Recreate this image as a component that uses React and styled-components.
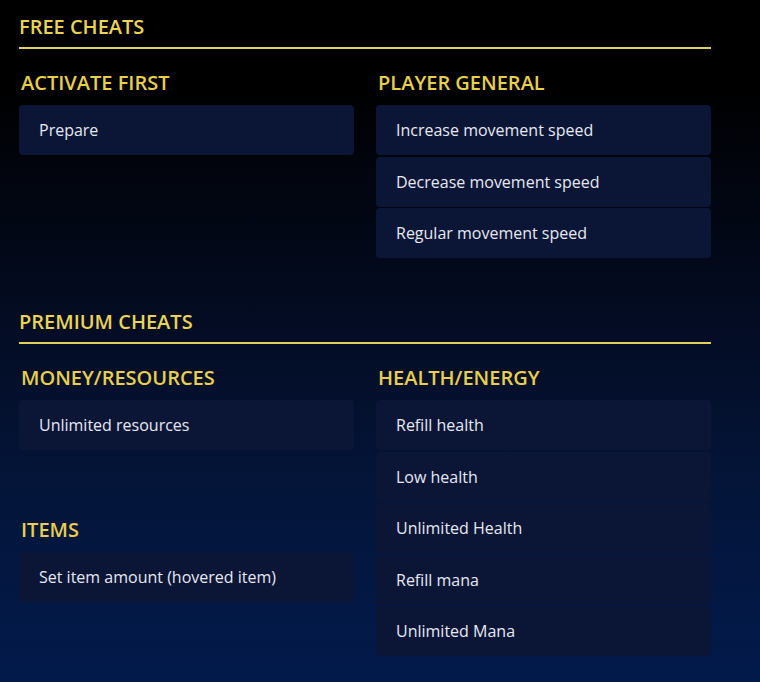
import React from 'react';
import styled, { createGlobalStyle } from 'styled-components';

const GlobalStyle = createGlobalStyle`
  html, body {
    margin: 0;
    padding: 0;
    height: 100%;
  }
  body {
    background: linear-gradient(to bottom, #000 0%, #000 12%, #030a1e 42%, #04153a 72%, #021a4b 100%);
    font-family: "Open Sans", "Noto Sans", sans-serif;
    color: #e4e6f0;
    overflow: hidden;
  }
`

const Page = styled.div`
  width: 692px;
  padding: 15px 0 0 19px;
`

const Section = styled.section`
  & + & {
    margin-top: 52px;
  }
`

const SectionTitle = styled.h2`
  margin: 0;
  font-size: 20px;
  line-height: 24px;
  font-weight: 600;
  text-transform: uppercase;
  color: #ead455;
  padding-bottom: 8px;
  border-bottom: 2px solid #e4d05c;
`

const Columns = styled.div`
  display: grid;
  grid-template-columns: 335px 335px;
  column-gap: 22px;
  margin-top: 22px;
`

const Column = styled.div`
  display: flex;
  flex-direction: column;
  gap: 68px;
`

const Category = styled.div`
  display: flex;
  flex-direction: column;
`

const CategoryTitle = styled.h3`
  margin: 0 0 10px 2px;
  font-size: 20px;
  line-height: 24px;
  font-weight: 600;
  text-transform: uppercase;
  color: #e8cf4c;
`

const List = styled.div`
  display: flex;
  flex-direction: column;
  gap: 1.5px;
`

const Cheat = styled.div`
  height: 50px;
  display: flex;
  align-items: center;
  padding: 0 20px;
  background: #0b1637;
  border-radius: 4px;
  font-size: 16px;
  color: #e6e8f2;
`

const sections = [
  {
    title: 'Free cheats',
    columns: [
      [{ name: 'Activate first', items: ['Prepare'] }],
      [{ name: 'Player general', items: ['Increase movement speed', 'Decrease movement speed', 'Regular movement speed'] }],
    ],
  },
  {
    title: 'Premium cheats',
    columns: [
      [
        { name: 'Money/Resources', items: ['Unlimited resources'] },
        { name: 'Items', items: ['Set item amount (hovered item)'] },
      ],
      [{ name: 'Health/Energy', items: ['Refill health', 'Low health', 'Unlimited Health', 'Refill mana', 'Unlimited Mana'] }],
    ],
  },
]

const App = () => {
  return (
    <Page>
      <GlobalStyle />
      {sections.map((section) => (
        <Section key={section.title}>
          <SectionTitle>{section.title}</SectionTitle>
          <Columns>
            {section.columns.map((column, index) => (
              <Column key={index}>
                {column.map((category) => (
                  <Category key={category.name}>
                    <CategoryTitle>{category.name}</CategoryTitle>
                    <List>
                      {category.items.map((item) => (
                        <Cheat key={item}>{item}</Cheat>
                      ))}
                    </List>
                  </Category>
                ))}
              </Column>
            ))}
          </Columns>
        </Section>
      ))}
    </Page>
  )
}

export default App;
